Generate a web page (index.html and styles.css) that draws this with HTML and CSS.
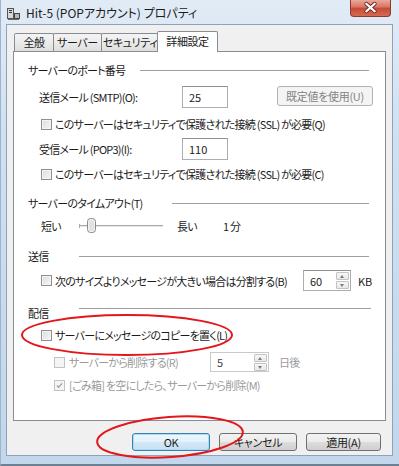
FILE: index.html
```html
<!DOCTYPE html>
<html lang="ja">

<head>
    <meta charset="UTF-8">
    <title>Hit-5 (POPアカウント) プロパティ</title>
    <link rel="stylesheet" href="styles.css">
</head>

<body>

    <div class="window">
        <!-- Заголовок окна -->
        <div class="titlebar">
            <svg class="app-icon" viewBox="0 0 13 13">
                <rect x="0.5" y="1.5" width="6" height="10" fill="#d8d8d8" stroke="#555" />
                <rect x="2" y="3" width="3" height="1" fill="#333" />
                <rect x="2" y="5" width="3" height="1" fill="#333" />
                <rect x="7.5" y="6.5" width="5" height="5" fill="#b8b8b8" stroke="#444" />
                <rect x="1" y="12" width="11" height="1" fill="#666" />
            </svg>
            <span class="title">Hit-5 (POPアカウント) プロパティ</span>
            <div class="close-btn">
                <svg viewBox="0 0 41 17">
                    <path d="M16 4 L25 12 M25 4 L16 12" stroke="#5a1a14" stroke-width="4" stroke-linecap="round" />
                    <path d="M16 4 L25 12 M25 4 L16 12" stroke="#fff" stroke-width="2.4" stroke-linecap="round" />
                </svg>
            </div>
        </div>

        <div class="client">
            <div class="tabs">
                <div class="tab tab-general">全般</div>
                <div class="tab tab-server">サーバー</div>
                <div class="tab tab-security">セキュリティ</div>
                <div class="tab tab-advanced active">詳細設定</div>
            </div>

            <div class="panel">
                <div class="group-title tight">
                    <span>サーバーのポート番号</span>
                    <div class="rule"></div>
                </div>

                <div class="field-row row-smtp">
                    <span class="field-label">送信メール (SMTP)(O):</span>
                    <div class="text-box">25</div>
                    <div class="btn btn-small disabled">既定値を使用(U)</div>
                </div>

                <div class="check-row row-ssl1">
                    <span class="checkbox"></span>
                    <span>このサーバーはセキュリティで保護された接続 (SSL) が必要(Q)</span>
                </div>

                <div class="field-row row-pop">
                    <span class="field-label">受信メール (POP3)(I):</span>
                    <div class="text-box">110</div>
                </div>

                <div class="check-row row-ssl2">
                    <span class="checkbox"></span>
                    <span>このサーバーはセキュリティで保護された接続 (SSL) が必要(C)</span>
                </div>

                <div class="group-title row-timeout">
                    <span>サーバーのタイムアウト(T)</span>
                    <div class="rule"></div>
                </div>

                <div class="slider-row">
                    <span class="slider-label">短い</span>
                    <svg class="slider" viewBox="0 0 84 20">
                        <rect x="0" y="9" width="84" height="1" fill="#a8a8a8" />
                        <rect x="0" y="10" width="84" height="1" fill="#e6e6e6" />
                        <rect x="0" y="8" width="1" height="4" fill="#a8a8a8" />
                        <rect x="8.5" y="2.5" width="8" height="14" rx="3" fill="#f2f2f2" stroke="#8a8a8a" />
                        <rect x="10" y="4" width="5" height="11" rx="2" fill="#e2e2e2" />
                    </svg>
                    <span class="slider-long">長い</span>
                    <span class="slider-value">1 分</span>
                </div>

                <div class="group-title row-send">
                    <span>送信</span>
                    <div class="rule"></div>
                </div>

                <div class="spin-row row-split">
                    <span class="checkbox"></span>
                    <span class="split-label">次のサイズよりメッセージが大きい場合は分割する(B)</span>
                    <div class="spinner">
                        <span>60</span>
                        <div class="spin-arrows">
                            <span class="arrow up"></span>
                            <span class="arrow down"></span>
                        </div>
                    </div>
                    <span class="unit">KB</span>
                </div>

                <div class="group-title row-deliver high-rule">
                    <span>配信</span>
                    <div class="rule"></div>
                </div>

                <div class="check-row row-copy">
                    <span class="checkbox"></span>
                    <span>サーバーにメッセージのコピーを置く(L)</span>
                </div>

                <div class="spin-row row-delete disabled">
                    <span class="checkbox"></span>
                    <span class="delete-label">サーバーから削除する(R)</span>
                    <div class="spinner spinner-days">
                        <span>5</span>
                        <div class="spin-arrows">
                            <span class="arrow up"></span>
                            <span class="arrow down"></span>
                        </div>
                    </div>
                    <span class="unit-days">日後</span>
                </div>

                <div class="check-row row-trash disabled">
                    <span class="checkbox checked">
                        <svg viewBox="0 0 11 11">
                            <path d="M2.5 5.5 L4.5 7.8 L8.5 2.8" fill="none" stroke="#9a9a9a" stroke-width="1.4" />
                        </svg>
                    </span>
                    <span>[ごみ箱] を空にしたら、サーバーから削除(M)</span>
                </div>
            </div>

            <div class="buttons">
                <div class="btn btn-default">OK</div>
                <div class="btn">キャンセル</div>
                <div class="btn btn-apply">適用(A)</div>
            </div>
        </div>
    </div>

    <!-- Красные пометки поверх окна -->
    <svg class="marks" viewBox="0 0 399 466">
        <ellipse cx="127" cy="335" rx="105" ry="20" fill="none" stroke="#e3161b" stroke-width="2" />
        <ellipse cx="170" cy="437" rx="73" ry="20" fill="none" stroke="#e3161b" stroke-width="2"
            transform="rotate(-4 170 437)" />
    </svg>

</body>

</html>
```

FILE: styles.css
```css
* {
    box-sizing: border-box;
}

body {
    margin: 0;
    width: 399px;
    height: 466px;
    overflow: hidden;
    position: relative;
    font-family: "Noto Sans CJK JP", "Liberation Sans", sans-serif;
    font-size: 11px;
    letter-spacing: -0.75px;
    font-feature-settings: "palt";
    color: #1b1b1b;
    white-space: nowrap;
}

/* Рамка окна */
.window {
    height: 466px;
    padding: 0 6px 8px 5px;
    display: flex;
    flex-direction: column;
    background: linear-gradient(180deg, #e1ebf6 0%, #cfe0f1 30%, #c2d7ec 100%);
    border-left: 1px solid #9fb4ca;
    border-bottom: 2px solid #6d7f92;
}

.titlebar {
    height: 24px;
    display: flex;
    align-items: flex-start;
}

.app-icon {
    width: 13px;
    height: 13px;
    margin: 7px 6px 0 1px;
}

.title {
    margin-top: 5px;
    font-size: 12px;
    letter-spacing: 0;
    line-height: 16px;
    color: #1c1c1c;
}

.close-btn {
    margin-left: auto;
    margin-right: 2px;
    width: 41px;
    height: 17px;
    border: 1px solid #8a3a30;
    border-top: none;
    border-radius: 0 0 4px 4px;
    background: linear-gradient(180deg, #e9a89c 0%, #d9735f 45%, #c44a36 50%, #d76a52 100%);
}

.close-btn svg {
    display: block;
    width: 39px;
    height: 16px;
}

/* Клиентская область */
.client {
    flex: 1;
    border: 1px solid #8fa3b8;
    background-color: #f0f0f0;
    padding: 0 6px;
    display: flex;
    flex-direction: column;
}

.tabs {
    margin-top: 6px;
    height: 20px;
    padding-left: 1px;
    display: flex;
    align-items: flex-end;
}

.tab {
    height: 18px;
    margin-left: -1px;
    border: 1px solid #898c95;
    border-bottom: none;
    border-radius: 2px 2px 0 0;
    background: linear-gradient(180deg, #f4f4f4 0%, #ebebeb 50%, #dedede 100%);
    text-align: center;
    line-height: 16px;
    letter-spacing: -0.4px;
}

.tab-general {
    width: 40px;
    margin-left: 0;
}

.tab-server {
    width: 49px;
}

.tab-security {
    width: 58px;
}

.tab-advanced {
    width: 61px;
}

.tab.active {
    height: 21px;
    margin-left: -2px;
    margin-bottom: -1px;
    position: relative;
    z-index: 1;
    background: #fff;
    line-height: 18px;
}

.panel {
    height: 370px;
    border: 1px solid #898c95;
    background-color: #fff;
    padding-top: 9px;
    display: flex;
    flex-direction: column;
}

/* Заголовки групп */
.group-title {
    height: 18px;
    display: flex;
    align-items: center;
    gap: 30px;
    padding: 0 16px 0 14px;
}

.group-title.tight {
    gap: 15px;
}

.rule {
    flex: 1;
    height: 1px;
    background-color: #a0a0a0;
}

.high-rule {
    align-items: flex-start;
    line-height: 18px;
}

.high-rule .rule {
    margin-top: 4px;
    margin-right: -2px;
}

.row-timeout,
.row-send {
    margin-top: 11px;
}

.row-deliver {
    margin-top: 13px;
}

/* Строки с полями */
.field-row {
    height: 22px;
    display: flex;
    align-items: center;
    padding: 0 12px 0 25px;
}

.row-smtp {
    margin-top: 7px;
}

.row-pop {
    margin-top: 5px;
}

.field-label {
    width: 143px;
}

.text-box {
    width: 46px;
    height: 22px;
    border: 1px solid #abadb3;
    border-top-color: #8e8f8f;
    padding-left: 6px;
    line-height: 20px;
    letter-spacing: 0;
}

.btn {
    width: 78px;
    height: 18px;
    border: 1px solid #707070;
    border-radius: 3px;
    background: linear-gradient(180deg, #f2f2f2 0%, #ebebeb 50%, #dddddd 50%, #cfcfcf 100%);
    text-align: center;
    line-height: 16px;
    letter-spacing: -0.3px;
}

.btn-small {
    width: 96px;
    height: 20px;
    margin-left: auto;
    margin-bottom: 2px;
    line-height: 18px;
}

.btn.disabled {
    border-color: #adb2b5;
    background: #f4f4f4;
    color: #838383;
}

/* Чекбоксы */
.check-row {
    height: 18px;
    display: flex;
    align-items: center;
    gap: 3px;
    padding-left: 27px;
}

.row-ssl1 {
    margin-top: 7px;
}

.row-ssl2 {
    margin-top: 5px;
}

.row-copy {
    margin-top: 4px;
}

.row-trash {
    margin-top: 4px;
    padding-left: 40px;
    gap: 4px;
}

.checkbox {
    width: 11px;
    height: 11px;
    flex-shrink: 0;
    border: 1px solid #8e8f8f;
    background: linear-gradient(135deg, #dcdcdc 0%, #f6f6f6 100%);
    box-shadow: inset 0 0 0 1px #f4f4f4;
}

.checkbox svg {
    display: block;
    width: 9px;
    height: 9px;
}

.disabled {
    color: #9a9a9a;
}

.disabled .checkbox {
    border-color: #c2c2c2;
    background: #f4f4f4;
}

/* Ползунок */
.slider-row {
    height: 20px;
    margin-top: 4px;
    display: flex;
    align-items: center;
    padding-left: 27px;
}

.slider-label {
    width: 38px;
}

.slider {
    width: 84px;
    height: 20px;
}

.slider-long {
    margin-left: 14px;
}

.slider-value {
    margin-left: 26px;
}

/* Строки со счётчиками */
.spin-row {
    height: 21px;
    display: flex;
    align-items: center;
    padding-left: 27px;
}

.row-split {
    margin-top: 5px;
}

.split-label {
    width: 248px;
    margin-left: 3px;
}

.row-delete {
    height: 20px;
    margin-top: 8px;
    padding-left: 40px;
}

.delete-label {
    width: 141px;
    margin-left: 4px;
}

.spinner {
    width: 48px;
    height: 21px;
    border: 1px solid #abadb3;
    border-top-color: #8e8f8f;
    display: flex;
    align-items: center;
    justify-content: space-between;
    padding: 0 1px 0 6px;
    color: #1b1b1b;
    letter-spacing: 0;
}

.spinner-days {
    width: 59px;
    height: 20px;
    border-color: #c9c9c9;
    color: #444;
}

.spin-arrows {
    display: flex;
    flex-direction: column;
    gap: 1px;
}

.arrow {
    width: 13px;
    height: 8px;
    border: 1px solid #c3c3c3;
    border-radius: 1px;
    background: linear-gradient(180deg, #f7f7f7, #e8e8e8);
    position: relative;
}

.arrow::after {
    content: "";
    position: absolute;
    left: 3px;
    border-left: 2.5px solid transparent;
    border-right: 2.5px solid transparent;
}

.arrow.up::after {
    top: 2px;
    border-bottom: 3px solid #7a7a7a;
}

.arrow.down::after {
    top: 2px;
    border-top: 3px solid #7a7a7a;
}

.unit {
    margin-left: 7px;
    letter-spacing: 0;
}

.unit-days {
    margin-left: 10px;
}

/* Кнопки внизу */
.buttons {
    margin-top: 12px;
    padding-right: 5px;
    display: flex;
    justify-content: flex-end;
    gap: 9px;
}

.btn-default {
    border-color: #3c7fb1;
    background: linear-gradient(180deg, #eef7fd 0%, #e3f1fb 50%, #d2e8f7 50%, #c6e0f3 100%);
    box-shadow: inset 0 0 0 1px #a9dcf5;
}

.btn-apply {
    width: 75px;
}

.marks {
    position: absolute;
    top: 0;
    left: 0;
    width: 399px;
    height: 466px;
    pointer-events: none;
}
```
